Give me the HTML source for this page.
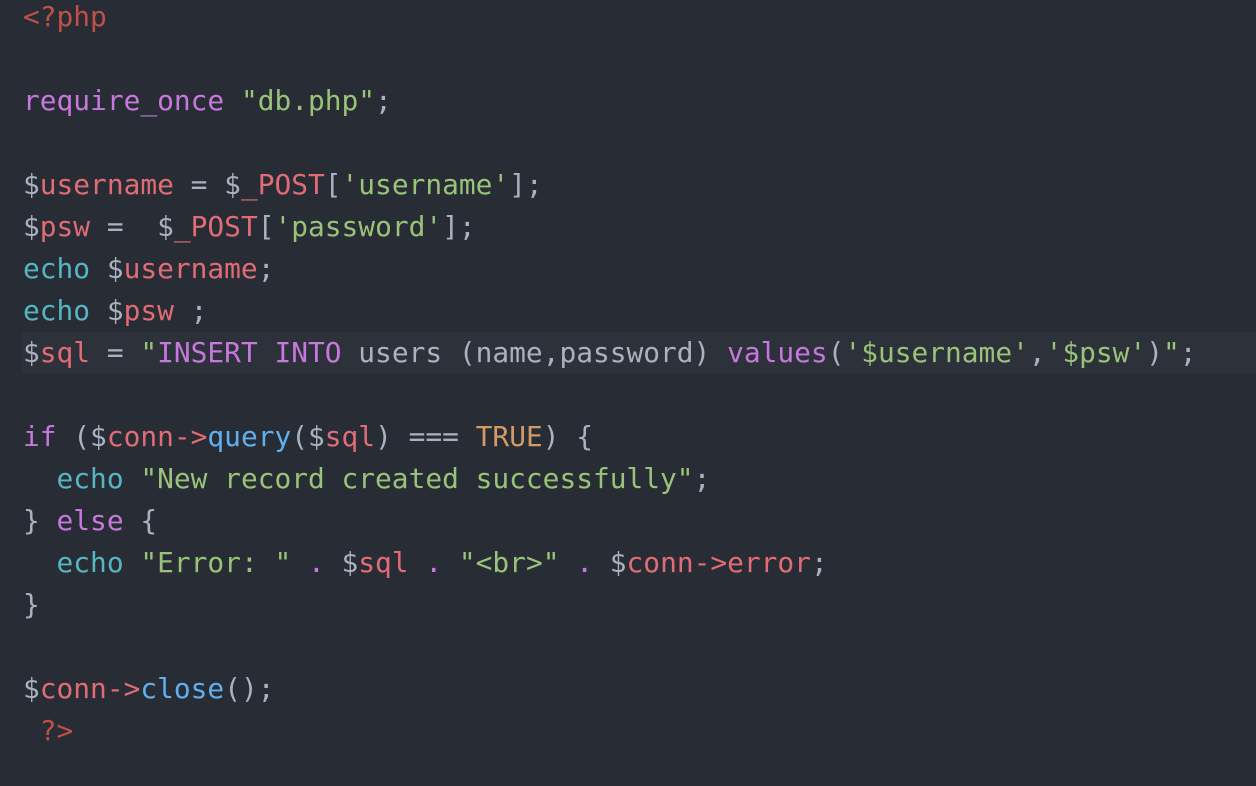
<!DOCTYPE html>
<html><head><meta charset="utf-8"><style>
html,body{margin:0;padding:0;background:#282c34;width:1256px;height:786px;overflow:hidden}
pre{margin:0;position:absolute;left:23px;top:-4px;font-family:"DejaVu Sans Mono","Liberation Mono",monospace;font-size:27.85px;line-height:42px;color:#abb2bf}
.hl{position:absolute;left:22px;top:332px;width:1234px;height:42px;background:#2c313a}
.p{color:#c678dd}.r{color:#e06c75}.g{color:#98c379}.c{color:#56b6c2}.b{color:#61afef}.o{color:#d19a66}.t{color:#be5046}
</style></head><body>
<div class="hl"></div>
<pre><span class="t">&lt;?php</span>

<span class="p">require_once</span> <span class="g">"db.php"</span>;

$<span class="r">username</span> = $<span class="r">_POST</span>[<span class="g">'username'</span>];
$<span class="r">psw</span> =  $<span class="r">_POST</span>[<span class="g">'password'</span>];
<span class="c">echo</span> $<span class="r">username</span>;
<span class="c">echo</span> $<span class="r">psw</span> ;
$<span class="r">sql</span> = <span class="g">"</span><span class="p">INSERT INTO</span> users (name,password) <span class="p">values</span>(<span class="g">'$username'</span>,<span class="g">'$psw'</span>)<span class="g">"</span>;

<span class="p">if</span> ($<span class="r">conn-&gt;</span><span class="b">query</span>($<span class="r">sql</span>) === <span class="o">TRUE</span>) {
  <span class="c">echo</span> <span class="g">"New record created successfully"</span>;
} <span class="p">else</span> {
  <span class="c">echo</span> <span class="g">"Error: "</span> <span class="p">.</span> $<span class="r">sql</span> <span class="p">.</span> <span class="g">"&lt;br&gt;"</span> <span class="p">.</span> $<span class="r">conn-&gt;error</span>;
}

$<span class="r">conn-&gt;</span><span class="b">close</span>();
 <span class="t">?&gt;</span></pre>
</body></html>
